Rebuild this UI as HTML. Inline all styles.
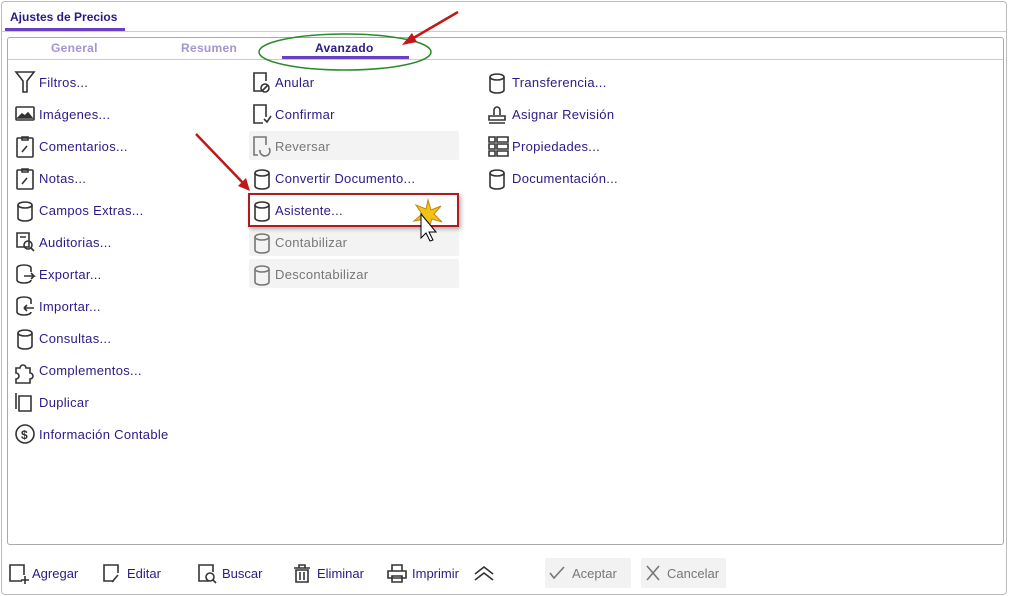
<!DOCTYPE html>
<html><head><meta charset="utf-8"><style>
body{margin:0;width:1010px;height:596px;background:#fff;font-family:"Liberation Sans",sans-serif;position:relative;overflow:hidden}
.a{position:absolute}
.t{font-size:13px;color:#2b1a86;white-space:nowrap;letter-spacing:.3px}
.d{color:#777}
svg{position:absolute}
.tab{position:absolute;top:41px;font-size:12px;font-weight:bold;color:#a594cf;letter-spacing:.3px}
.box{position:absolute;left:249px;width:210px;height:29px;background:#f3f3f3;border-radius:2px}
.bt{font-size:13px;color:#2b1a86;position:absolute;top:566px}
</style></head><body>
<div class="a" style="left:1px;top:1px;width:1004px;height:592px;border:1px solid #bbb;border-radius:4px"></div>
<div class="a" style="left:10px;top:10px;font-size:12px;font-weight:bold;color:#2b1a86">Ajustes de Precios</div>
<div class="a" style="left:5px;top:28px;width:120px;height:3px;background:#6a3fc4"></div>
<div class="a" style="left:2px;top:31px;width:1004px;height:1px;background:#ccc"></div>
<div class="a" style="left:7px;top:37px;width:995px;height:506px;border:1px solid #aaa;border-radius:3px"></div>
<div class="a" style="left:8px;top:59px;width:995px;height:1px;background:#ccc"></div>
<div class="tab" style="left:51px">General</div>
<div class="tab" style="left:181px">Resumen</div>
<div class="tab" style="left:315px;color:#2b1a86">Avanzado</div>
<div class="a" style="left:282px;top:56px;width:127px;height:3px;background:#6a3fc4"></div>
<svg style="left:0;top:0" width="1010" height="596">
<ellipse cx="345" cy="52" rx="86" ry="18" fill="none" stroke="#2a8a2a" stroke-width="1.5"/>
<line x1="458" y1="12" x2="410" y2="40" stroke="#c01818" stroke-width="2.5"/>
<polygon points="402,45 412,33 417,42" fill="#c01818"/>
<line x1="196" y1="134" x2="244" y2="184" stroke="#c01818" stroke-width="2.5"/>
<polygon points="250,191 238,186 246,178" fill="#c01818"/>
</svg>
<div class="box" style="top:131px"></div>
<div class="box" style="top:227px"></div>
<div class="box" style="top:259px"></div>
<div class="a" style="left:248px;top:193px;width:207px;height:30px;border:2px solid #b01c1c;box-shadow:2px 2px 4px rgba(0,0,0,.3)"></div>
<svg style="left:0;top:0" width="1010" height="596" fill="none" stroke="#333" stroke-width="1.6">
<path d="M16 72h18l-7 9v11h-4V81z"/>
<rect x="16" y="107" width="18" height="13" rx="1"/><path d="M18 118l4-4 3 2 3-3 4 5z" fill="#333"/>
<rect x="17" y="138" width="16" height="19" rx="1"/><path d="M22 137h6v3h-6zM22 152l5-6"/>
<rect x="17" y="170" width="16" height="19" rx="1"/><path d="M22 169h6v3h-6zM22 184l5-6"/>
<ellipse cx="25" cy="205" rx="7" ry="3"/><path d="M18 205v13c0 4 14 4 14 0v-13"/>
<path d="M17 233h12v14h-12zM20 237h6"/><circle cx="28" cy="245" r="4"/><path d="M31 248l3 3"/>
<path d="M17 268c0-4 14-4 14 0v4M17 268v12c0 4 14 4 14 0M24 276h10l-3-3M34 276l-3 3"/>
<path d="M17 300c0-4 14-4 14 0v4M17 300v12c0 4 14 4 14 0M24 308h10M24 308l3-3M24 308l3 3"/>
<ellipse cx="25" cy="333" rx="7" ry="3"/><path d="M18 333v13c0 4 14 4 14 0v-13"/>
<path d="M16 368h4a3 3 0 016 0h4v5a3 3 0 010 6v4H16v-4a3 3 0 000-6z"/>
<path d="M16 393v16M19 396h12v15H19z"/>
<circle cx="25" cy="434" r="9"/><text x="21" y="439" font-size="12" fill="#333" stroke="none" font-weight="bold">$</text>
<path d="M262 91h-8V73h12v8"/><circle cx="265" cy="88" r="4"/><path d="M262 91l6-6"/>
<path d="M263 123h-9V105h12v12M264 119l3 3 4-6"/>
<g stroke="#777"><path d="M258 155h-4V137h12v8"/><path d="M260 150a5 5 0 109-2"/>
<ellipse cx="262" cy="237" rx="7" ry="3"/><path d="M255 237v13c0 4 14 4 14 0v-13"/>
<ellipse cx="262" cy="269" rx="7" ry="3"/><path d="M255 269v13c0 4 14 4 14 0v-13"/></g>
<ellipse cx="262" cy="173" rx="7" ry="3"/><path d="M255 173v13c0 4 14 4 14 0v-13"/>
<ellipse cx="262" cy="205" rx="7" ry="3"/><path d="M255 205v13c0 4 14 4 14 0v-13"/>
<ellipse cx="497" cy="77" rx="7" ry="3"/><path d="M490 77v13c0 4 14 4 14 0v-13"/>
<path d="M494 115v-5a3 3 0 016 0v5M489 116h16v4h-16zM489 123h16"/>
<path d="M489 137h6v5h-6zM489 144h6v5h-6zM489 151h6v5h-6zM497 137h11v5h-11zM497 144h11v5h-11zM497 151h11v5h-11z"/>
<ellipse cx="497" cy="173" rx="7" ry="3"/><path d="M490 173v13c0 4 14 4 14 0v-13"/>
<path d="M22 581h-12V565h14v10M25 576v8M21 580h8"/>
<path d="M114 581h-10V565h14v8M112 582l6-7"/>
<path d="M209 581h-10V565h14v7"/><circle cx="210" cy="577" r="4"/><path d="M213 580l3 3"/>
<path d="M294 568h16M299 568v-3h6v3M296 570h12v12h-12zM300 572v8M304 572v8"/>
<path d="M392 571v-6h10v6M388 571h18v7h-18zM392 576h10v6h-10z"/>
<path d="M475 574l9-7 9 7M475 580l9-7 9 7"/>
</svg>
<div class="box" style="left:545px;top:558px;width:86px;height:30px;background:#f2f2f2"></div>
<div class="box" style="left:641px;top:558px;width:85px;height:30px;background:#f2f2f2"></div>
<svg style="left:0;top:0" width="1010" height="596" fill="none" stroke="#777" stroke-width="1.6">
<path d="M550 573l4 5 10-11M647 566l12 14M659 566l-12 14"/>
</svg>
<svg style="left:0;top:0" width="1010" height="596">
<polygon points="428,200 431,210 441,206 434,214 442,222 432,219 428,230 425,219 414,221 422,214 416,205 426,209" fill="#f2c21a" stroke="#c08a10"/>
<path d="M421 214v24l5-5 4 8 3-1-4-8h7z" fill="#fff" stroke="#000"/>
</svg>
<div class="a t" style="left:39px;top:75px">Filtros...</div>
<div class="a t" style="left:39px;top:107px">Imágenes...</div>
<div class="a t" style="left:39px;top:139px">Comentarios...</div>
<div class="a t" style="left:39px;top:171px">Notas...</div>
<div class="a t" style="left:39px;top:203px">Campos Extras...</div>
<div class="a t" style="left:39px;top:235px">Auditorias...</div>
<div class="a t" style="left:39px;top:267px">Exportar...</div>
<div class="a t" style="left:39px;top:299px">Importar...</div>
<div class="a t" style="left:39px;top:331px">Consultas...</div>
<div class="a t" style="left:39px;top:363px">Complementos...</div>
<div class="a t" style="left:39px;top:395px">Duplicar</div>
<div class="a t" style="left:39px;top:427px">Información Contable</div>
<div class="a t" style="left:275px;top:75px">Anular</div>
<div class="a t" style="left:275px;top:107px">Confirmar</div>
<div class="a t d" style="left:275px;top:139px">Reversar</div>
<div class="a t" style="left:275px;top:171px">Convertir Documento...</div>
<div class="a t" style="left:275px;top:203px">Asistente...</div>
<div class="a t d" style="left:275px;top:235px">Contabilizar</div>
<div class="a t d" style="left:275px;top:267px">Descontabilizar</div>
<div class="a t" style="left:512px;top:75px">Transferencia...</div>
<div class="a t" style="left:512px;top:107px">Asignar Revisión</div>
<div class="a t" style="left:512px;top:139px">Propiedades...</div>
<div class="a t" style="left:512px;top:171px">Documentación...</div>
<div class="bt" style="left:32px">Agregar</div>
<div class="bt" style="left:127px">Editar</div>
<div class="bt" style="left:222px">Buscar</div>
<div class="bt" style="left:317px">Eliminar</div>
<div class="bt" style="left:412px">Imprimir</div>
<div class="bt" style="left:572px;color:#777">Aceptar</div>
<div class="bt" style="left:667px;color:#777">Cancelar</div>
</body></html>
